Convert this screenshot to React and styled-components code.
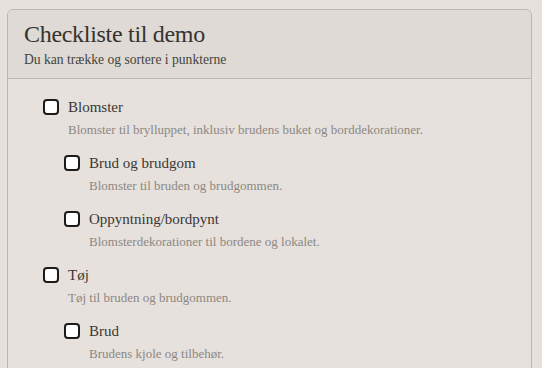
import React from "react";
import styled, { createGlobalStyle } from "styled-components";

const GlobalStyle = createGlobalStyle`
  html, body {
    margin: 0;
    padding: 0;
    background: #e6e1dc;
    font-family: "Liberation Serif", "DejaVu Serif", serif;
    overflow: hidden;
  }
`;

const Page = styled.div`
  padding: 9px 10px 0 7px;
  height: 368px;
  box-sizing: border-box;
`;

const Card = styled.div`
  border: 1px solid #bcb7b2;
  border-radius: 6px 6px 0 0;
  background: #e6e1dc;
  min-height: 420px;
`;

const Header = styled.div`
  background: #dfdad5;
  border-bottom: 1px solid #bcb7b2;
  border-radius: 6px 6px 0 0;
  padding: 10px 16px 0 16px;
  height: 58px;
`;

const Title = styled.h1`
  margin: 0;
  font-size: 24px;
  font-weight: 400;
  color: #35322f;
  line-height: 28px;
  letter-spacing: -0.3px;
`;

const Subtitle = styled.p`
  margin: 4px 0 0;
  font-size: 13.6px;
  color: #3f4540;
  line-height: 16px;
`;

const List = styled.div`
  padding: 18px 0 0 35px;
  display: flex;
  flex-direction: column;
`;

const Item = styled.div`
  padding-left: ${(p) => p.$level * 21}px;
  height: 56px;
`;

const Row = styled.label`
  display: flex;
  align-items: center;
  gap: 9px;
  height: 20px;
`;

const Box = styled.span`
  width: 12px;
  height: 12px;
  border: 2px solid #1c1b1a;
  border-radius: 4px;
  background: #ffffff;
  flex: none;
`;

const Label = styled.span`
  font-size: 15px;
  color: #3a3734;
`;

const Desc = styled.div`
  margin: 5px 0 0 25px;
  font-size: 13px;
  color: #8d8883;
  line-height: 16px;
`;

const items = [
  { level: 0, label: "Blomster", desc: "Blomster til brylluppet, inklusiv brudens buket og borddekorationer." },
  { level: 1, label: "Brud og brudgom", desc: "Blomster til bruden og brudgommen." },
  { level: 1, label: "Oppyntning/bordpynt", desc: "Blomsterdekorationer til bordene og lokalet." },
  { level: 0, label: "Tøj", desc: "Tøj til bruden og brudgommen." },
  { level: 1, label: "Brud", desc: "Brudens kjole og tilbehør." },
];

export default function App() {
  return (
    <>
      <GlobalStyle />
      <Page>
        <Card>
          <Header>
            <Title>Checkliste til demo</Title>
            <Subtitle>Du kan trække og sortere i punkterne</Subtitle>
          </Header>
          <List>
            {items.map((it, i) => (
              <Item key={i} $level={it.level}>
                <Row>
                  <Box />
                  <Label>{it.label}</Label>
                </Row>
                <Desc>{it.desc}</Desc>
              </Item>
            ))}
          </List>
        </Card>
      </Page>
    </>
  );
}
